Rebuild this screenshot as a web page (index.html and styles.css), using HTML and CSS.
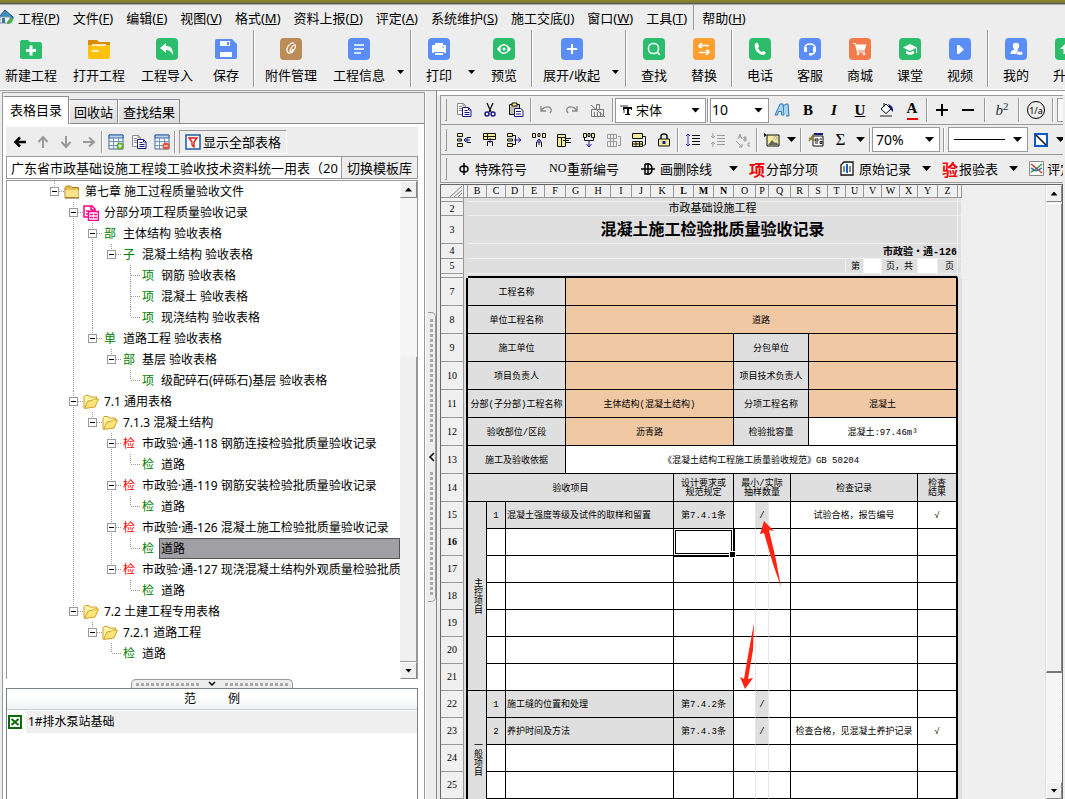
FILE: index.html
```
<!DOCTYPE html>
<html lang="zh-CN">
<head>
  <meta charset="UTF-8" />
  <meta name="viewport" content="width=device-width, initial-scale=1.0"/>
  <title>市政验·通-126 混凝土施工检验批质量验收记录</title>
  <link rel="stylesheet" href="styles.css">
</head>
<body>

<!-- shared icons -->
<svg class="defs" width="0" height="0">
  <symbol id="folder" viewBox="0 0 16 16"><path d="M1 3.5 2.5 2h4L8 3.500h6.500v10H1z" fill="#e9bf4b" stroke="#a87a1c"/><path d="M1.500 6h13v7.500h-13z" fill="#fbe38d"/><path d="M1 14h14" stroke="#7d5a12"/></symbol>
  <symbol id="open" viewBox="0 0 16 16"><path d="M1 14V2.500l1-1h4l1 1.500h6.500V6" fill="#fdf3a8" stroke="#d2a02c"/><path d="M1.500 14.500 5 7l4-.5L10.500 5h5L12 13z" fill="#fbe47a" stroke="#d2a02c"/></symbol>
  <symbol id="pages" viewBox="0 0 16 16"><path d="M1.500 1.500h6l2 2v9h-8zM7 1.500v2.500h2.500M3 4.500h3M3 6.500h3M3 8.500h3" fill="#fff" stroke="#888"/><path d="M6.500 5.500h6l2.500 2.500v6.500h-8.500z" fill="#fff" stroke="#1a1a80"/><path d="M12.500 5.500V8H15M8.500 8.500h3M8.500 10.500h5M8.500 12.500h5" fill="none" stroke="#1a1a80"/></symbol>
  <symbol id="grid" viewBox="0 0 16 16"><path d="M1 1h14v14H1z" fill="#fff" stroke="#39649c"/><path d="M1 1h14v3H1z" fill="#b9d2f0" stroke="#39649c"/><path d="M1 7.500h14M1 11.500h14M5.500 4v11M10.500 4v11" stroke="#6c92c4"/></symbol>
</svg>

<div class="titlebar"></div>

<nav class="menu">
  <svg class="logo" width="14" height="16" viewBox="0 0 14 16"><path d="M-1 8 5 1l8 7v2H-1z" fill="#3d8fc4" stroke="#24566f"/><path d="M0 8h10v6H0z" fill="#f3f6f8" stroke="#8896a0"/><path d="M2 9h3v5H2z" fill="#3f76a8"/><path d="M7 15c0-4 3-6 6-6 0 4-2 6-6 6z" fill="#4caf50"/></svg>
  <button>工程(<u>P</u>)</button>
  <button>文件(<u>F</u>)</button>
  <button>编辑(<u>E</u>)</button>
  <button>视图(<u>V</u>)</button>
  <button>格式(<u>M</u>)</button>
  <button>资料上报(<u>D</u>)</button>
  <button>评定(<u>A</u>)</button>
  <button>系统维护(<u>S</u>)</button>
  <button>施工交底(<u>J</u>)</button>
  <button>窗口(<u>W</u>)</button>
  <button>工具(<u>T</u>)</button>
  <button class="help">帮助(<u>H</u>)</button>
</nav>

<div class="toolbar">
  <button><svg viewBox="0 0 22 22"><path d="M0 4q0-2 2-2h6l2 2h10q2 0 2 2v13q0 2-2 2H2q-2 0-2-2z" fill="#2cbd6c"/><path d="M9.500 7.500h3V11H16v3h-3.500v3.500h-3V14H6v-3h3.500z" fill="#fff"/></svg>新建工程</button>
  <button><svg viewBox="0 0 22 22"><path d="M0 3q0-1 1-1h8l2 2h10q1 0 1 1v5H0z" fill="#d98a08"/><path d="M0 7h22v12q0 2-2 2H2q-2 0-2-2z" fill="#ffc20e"/><path d="M4 7h14M4 13h7" stroke="#fff" stroke-width="1.500"/></svg>打开工程</button>
  <button><svg viewBox="0 0 22 22"><rect width="22" height="22" rx="4" fill="#2cbd6c"/><path d="M4 10 10 5v3c5 0 7 3 7 9-2-4-4-5-7-5v3z" fill="#fff"/></svg>工程导入</button>
  <button><svg viewBox="0 0 22 22"><path d="M0 3q0-2 2-2h15l5 5v13q0 2-2 2H2q-2 0-2-2z" fill="#5a8df5"/><path d="M5 3h10v5H5zM5 14h12v5H5z" fill="#fff"/><path d="M12 4h2v3h-2z" fill="#5a8df5"/></svg>保存</button>
  <span class="sep"></span>
  <button><svg viewBox="0 0 22 22"><rect width="22" height="22" rx="4" fill="#bb8c58"/><path d="M14 5c-4-1-8 5-7 8s5 3 7-1 2-6 0-5-4 5-4 6 2 1 3-2" fill="none" stroke="#fff" stroke-width="1.200"/></svg>附件管理</button>
  <button><svg viewBox="0 0 22 22"><rect width="22" height="22" rx="4" fill="#5a8df5"/><path d="M6 7h10M6 11h10M6 15h7" stroke="#fff" stroke-width="1.500"/></svg>工程信息</button>
  <button class="drop" aria-label="工程信息选项"><i class="arrow"></i></button>
  <span class="sep"></span>
  <button><svg viewBox="0 0 22 22"><rect width="22" height="22" rx="4" fill="#5a8df5"/><path d="M7 5h8v2h2q1 0 1 1v6q0 1-1 1h-2v2H7v-2H5q-1 0-1-1V8q0-1 1-1h2z" fill="#fff"/><path d="M6 14.500h10" stroke="#5a8df5"/><path d="M14 9h2" stroke="#5a8df5"/></svg>打印</button>
  <button class="drop" aria-label="打印选项"><i class="arrow"></i></button>
  <button><svg viewBox="0 0 22 22"><rect width="22" height="22" rx="4" fill="#2cbd6c"/><path d="M4 11q7-10 14 0-7 10-14 0z" fill="#fff"/><circle cx="11" cy="11" r="3.500" fill="#2cbd6c"/><circle cx="11" cy="11" r="1.500" fill="#fff"/></svg>预览</button>
  <span class="sep"></span>
  <button><svg viewBox="0 0 22 22"><rect width="22" height="22" rx="4" fill="#5a8df5"/><path d="M11 6v10M6 11h10" stroke="#fff" stroke-width="2"/></svg>展开/收起</button>
  <button class="drop" aria-label="展开选项"><i class="arrow"></i></button>
  <span class="sep"></span>
  <button><svg viewBox="0 0 22 22"><rect width="22" height="22" rx="4" fill="#2cbd6c"/><rect x="5.500" y="5.500" width="10" height="10" rx="4.500" fill="none" stroke="#fff" stroke-width="1.500"/><path d="m14 14 3 3" stroke="#fff" stroke-width="1.500"/></svg>查找</button>
  <button><svg viewBox="0 0 22 22"><rect width="22" height="22" rx="4" fill="#ff9f30"/><path d="M16 7.500H6.500V10M9 5 6 7.500 9 10M6 14.500h9.500V12M13 12l3 2.500-3 2.500" fill="none" stroke="#fff" stroke-width="1.500"/></svg>替换</button>
  <span class="sep"></span>
  <button><svg viewBox="0 0 22 22"><rect width="22" height="22" rx="4" fill="#2cbd6c"/><path d="M7 5q2-1 3 3 0 1-1 2 1 3 4 4l1-1q4 1 2 3-2 2-5 0-4-2-5-6-1-4 1-5z" fill="#fff"/></svg>电话</button>
  <button><svg viewBox="0 0 22 22"><rect width="22" height="22" rx="4" fill="#5a8df5"/><path d="M6 12v-2q0-4 5-4t5 4v2q0 4-4 4.500" fill="none" stroke="#fff" stroke-width="1.500"/><path d="M5 9h3v5H5zM14 9h3v5h-3zM10 15h3v2.500h-3z" fill="#fff"/></svg>客服</button>
  <button><svg viewBox="0 0 22 22"><rect width="22" height="22" rx="4" fill="#f47a4a"/><path d="M4 5.500h2.500l2 8.500H16" fill="none" stroke="#fff" stroke-width="1.200"/><path d="M7 6.500h10.500l-2 6h-7z" fill="#fff"/><circle cx="9" cy="16" r="1.300" fill="#fff"/><circle cx="15" cy="16" r="1.300" fill="#fff"/></svg>商城</button>
  <button><svg viewBox="0 0 22 22"><rect width="22" height="22" rx="4" fill="#2cbd6c"/><path d="m4 9.500 7-3.500 7 3.500-7 3.500zM7 12.500l4 2 4-2v3q-4 2.500-8 0z" fill="#fff"/><path d="M17.500 10v5" stroke="#fff"/></svg>课堂</button>
  <button><svg viewBox="0 0 22 22"><rect width="22" height="22" rx="4" fill="#5a8df5"/><path d="M8 7h2l5 4.500-5 4.500H8z" fill="#fff"/></svg>视频</button>
  <span class="sep"></span>
  <button><svg viewBox="0 0 22 22"><rect width="22" height="22" rx="4" fill="#5a8df5"/><circle cx="11" cy="8" r="3.200" fill="#fff"/><path d="M5.500 16q0-4 4-4.500V10h3v1.500l1 1.500V16z" fill="#fff"/><path d="M12 13.500h5.500v3.500H12z" fill="#fff" stroke="#5a8df5" stroke-width=".5"/></svg>我的</button>
  <button><svg viewBox="0 0 22 22"><rect width="22" height="22" rx="4" fill="#2cbd6c"/><path d="m11 5 6 6h-3.500v5h-5v-5H5z" fill="#fff"/></svg>升级</button>
</div>

<main>
  <section class="side">
    <div class="tabs">
      <button class="active">表格目录</button><button>回收站</button><button>查找结果</button>
      <span class="rest"></span>
    </div>
    <div class="pane">
      <div class="side-tools">
        <button aria-label="后退"><svg viewBox="0 0 16 16"><path d="M14 8H3M8 3.500 3.500 8 8 12.500" fill="none" stroke="#000" stroke-width="2.500"/></svg></button>
        <button aria-label="上移"><svg viewBox="0 0 16 16"><path d="M8 14V3M3.500 8 8 3l4.500 5" fill="none" stroke="#999" stroke-width="2"/></svg></button>
        <button aria-label="下移"><svg viewBox="0 0 16 16"><path d="M8 2v11M3.500 8 8 13l4.500-5" fill="none" stroke="#999" stroke-width="2"/></svg></button>
        <button aria-label="前进"><svg viewBox="0 0 16 16"><path d="M2 8h11M8 3.500 13 8l-5 4.500" fill="none" stroke="#999" stroke-width="2"/></svg></button>
        <span class="sep"></span>
        <button aria-label="增加表格"><svg viewBox="0 0 16 16"><use href="#grid"/><circle cx="12" cy="12" r="3.500" fill="#5fae27"/><path d="M10 12h4M12 10v4" stroke="#fff"/></svg></button>
        <button aria-label="复制表格"><svg viewBox="0 0 16 16"><use href="#pages"/></svg></button>
        <button aria-label="删除表格"><svg viewBox="0 0 16 16"><use href="#grid"/><circle cx="12" cy="12" r="3.500" fill="#e0542f"/><path d="M10 12h4" stroke="#fff"/></svg></button>
        <span class="sep"></span>
        <button class="showall"><svg viewBox="0 0 16 16"><path d="M1 1h14v14H1z" fill="#fff" stroke="#1c5aa0" stroke-width="1.500"/><path d="M4 4h8L9 8v5L7 11V8z" fill="none" stroke="#e01010" stroke-width="1.300"/></svg>显示全部表格</button>
      </div>
      <div class="template">
        <input type="text" aria-label="模板库" value="广东省市政基础设施工程竣工验收技术资料统一用表（20">
        <button>切换模板库</button>
      </div>
      <div class="treebox">
        <ul class="tree">
          <li><div class="node"><i class="box"></i><svg class="ico"><use href="#folder"/></svg><span>第七章 施工过程质量验收文件</span></div>
            <ul>
              <li><div class="node"><i class="box"></i><svg class="ico" viewBox="0 0 16 16"><path d="M1 1h8l3 3v8H1zM8 1v4h4M3 6h3M3 9h2" fill="#fff" stroke="#f08" stroke-width="1.500"/><path d="M5.500 6.500h10v9h-10z" fill="#fff" stroke="#f08" stroke-width="1.500"/><path d="M7 9.500h3m1 0h3M7 12.500h3m1 0h3" stroke="#f08" stroke-width="1.500"/></svg><span>分部分项工程质量验收记录</span></div>
                <ul>
                  <li><div class="node"><i class="box"></i><b>部</b><span>主体结构 验收表格</span></div>
                    <ul>
                      <li><div class="node"><i class="box"></i><b>子</b><span>混凝土结构 验收表格</span></div>
                        <ul>
                          <li><div class="node"><i></i><b>项</b><span>钢筋 验收表格</span></div></li>
                          <li><div class="node"><i></i><b>项</b><span>混凝土 验收表格</span></div></li>
                          <li><div class="node"><i></i><b>项</b><span>现浇结构 验收表格</span></div></li>
                        </ul>
                      </li>
                    </ul>
                  </li>
                  <li><div class="node"><i class="box"></i><b>单</b><span>道路工程 验收表格</span></div>
                    <ul>
                      <li><div class="node"><i class="box"></i><b>部</b><span>基层 验收表格</span></div>
                        <ul>
                          <li><div class="node"><i></i><b>项</b><span>级配碎石(碎砾石)基层 验收表格</span></div></li>
                        </ul>
                      </li>
                    </ul>
                  </li>
                </ul>
              </li>
              <li><div class="node"><i class="box"></i><svg class="ico"><use href="#open"/></svg><span>7.1 通用表格</span></div>
                <ul>
                  <li><div class="node"><i class="box"></i><svg class="ico"><use href="#open"/></svg><span>7.1.3 混凝土结构</span></div>
                    <ul>
                      <li><div class="node"><i class="box"></i><b class="red">检</b><span>市政验·通-118 钢筋连接检验批质量验收记录</span></div>
                        <ul><li><div class="node"><i></i><b>检</b><span>道路</span></div></li></ul>
                      </li>
                      <li><div class="node"><i class="box"></i><b class="red">检</b><span>市政验·通-119 钢筋安装检验批质量验收记录</span></div>
                        <ul><li><div class="node"><i></i><b>检</b><span>道路</span></div></li></ul>
                      </li>
                      <li><div class="node"><i class="box"></i><b class="red">检</b><span>市政验·通-126 混凝土施工检验批质量验收记录</span></div>
                        <ul><li><div class="node"><i></i><b>检</b><span class="selected">道路</span></div></li></ul>
                      </li>
                      <li><div class="node"><i class="box"></i><b class="red">检</b><span>市政验·通-127 现浇混凝土结构外观质量检验批质</span></div>
                        <ul><li><div class="node"><i></i><b>检</b><span>道路</span></div></li></ul>
                      </li>
                    </ul>
                  </li>
                </ul>
              </li>
              <li><div class="node"><i class="box"></i><svg class="ico"><use href="#open"/></svg><span>7.2 土建工程专用表格</span></div>
                <ul>
                  <li><div class="node"><i class="box"></i><svg class="ico"><use href="#open"/></svg><span>7.2.1 道路工程</span></div>
                    <ul><li><div class="node"><i></i><b>检</b><span>道路</span></div></li></ul>
                  </li>
                </ul>
              </li>
            </ul>
          </li>
        </ul>
        <div class="scroll tree-scroll">
          <button aria-label="向上"><i class="arrow up"></i></button>
          <span class="track before"></span><span class="thumb"></span>
          <button aria-label="向下"><i class="arrow"></i></button>
        </div>
      </div>
      <div class="hsplit"><div><span class="dots"></span><svg width="18" height="8" viewBox="0 0 18 8"><path d="m6 2 3 3 3-3" fill="none" stroke="#000" stroke-width="1.500"/></svg><span class="dots"></span></div></div>
      <div class="examples">
        <h4>范<span></span>例</h4>
        <div class="example"><svg width="14" height="14" viewBox="0 0 14 14"><path d="M1 1h12v12H1z" fill="#fff" stroke="#0a6b0a" stroke-width="2"/><path d="m3.500 4 7 6M10.500 4l-7 6" stroke="#0a6b0a" stroke-width="2"/></svg><span>1#排水泵站基础</span></div>
      </div>
    </div>
  </section>

  <div class="vsplit"><div><span class="dots"></span><svg width="8" height="18" viewBox="0 0 8 18"><path d="M6 5 2 9l4 4" fill="none" stroke="#000" stroke-width="1.500"/></svg><span class="dots"></span></div></div>

  <section class="editor">
    <div class="bar bar-font">
      <span class="grip"></span>
      <button class="tool" aria-label="复制"><svg viewBox="0 0 16 16"><use href="#pages"/></svg></button>
      <button class="tool" aria-label="剪切"><svg viewBox="0 0 16 16"><path d="m5 1 4 9M11 1 7 10" stroke="#111" stroke-width="1.300"/><circle cx="5" cy="12" r="2" fill="none" stroke="#1a1a80" stroke-width="1.500"/><circle cx="11" cy="12" r="2" fill="none" stroke="#1a1a80" stroke-width="1.500"/></svg></button>
      <button class="tool" aria-label="粘贴"><svg viewBox="0 0 16 16"><path d="M1.500 2.500h10v10h-10z" fill="#c9c3ae" stroke="#111"/><path d="M4 1h5v3H4z" fill="#f6e58c" stroke="#111"/><path d="M6.500 6.500h6l2.500 2v6H6.500z" fill="#fff" stroke="#1a1a80"/><path d="M8 9.500h5M8 12h5" stroke="#1a1a80"/></svg></button>
      <span class="sep"></span>
      <button class="tool" aria-label="撤销"><svg viewBox="0 0 16 16"><path d="M3 4v5h5M3 9q3-5 8-4 4 2 1 6" fill="none" stroke="#888" stroke-width="1.300"/></svg></button>
      <button class="tool" aria-label="重做"><svg viewBox="0 0 16 16"><path d="M13 4v5H8M13 9Q10 4 5 5q-4 2-1 6" fill="none" stroke="#888" stroke-width="1.300"/></svg></button>
      <button class="tool" aria-label="清除格式"><svg viewBox="0 0 16 16"><path d="M1.500 7.500h12v7h-12zM6.500 7V2.500h3V7M4.500 14v-4M7.500 14v-4M10.500 14v-4M1 3l14 12" fill="none" stroke="#777"/></svg></button>
      <span class="sep"></span>
      <div class="combo font"><svg width="14" height="12" viewBox="0 0 14 12"><path d="M1 1h8v2H6v6H4V3H1z" fill="#999"/><path d="M4 3h9v3h-1V5h-2v5h1v1H6v-1h2V5H5v1H4z" fill="#111"/></svg><select aria-label="字体"><option>宋体</option></select><i class="arrow"></i></div>
      <span class="sep"></span>
      <div class="combo size"><select aria-label="字号"><option>10</option></select><i class="arrow"></i></div>
      <button class="tool" aria-label="艺术字"><svg viewBox="0 0 16 16"><path d="m1 13 5-11h3l1 11H7.500V9.500h-3L3.500 13zM9 4l3-2h2l1 12h-3" fill="#a8d4f2" stroke="#2878b8"/></svg></button>
      <button class="tool letter bold">B</button>
      <button class="tool letter italic">I</button>
      <button class="tool letter under">U</button>
      <button class="tool" aria-label="填充颜色"><svg viewBox="0 0 16 16"><path d="m3 7 5-5 5 5-5 4.500z" fill="#fff" stroke="#111"/><path d="M6 5V1" stroke="#111"/><path d="M10 2q6 2 5 8l-3-3z" fill="#1a1a80"/><path d="M2 14h12" stroke="#888" stroke-width="2"/></svg></button>
      <button class="tool letter color">A</button>
      <span class="sep"></span>
      <button class="tool" aria-label="增大"><svg viewBox="0 0 16 16"><path d="M8 2v12M2 8h12" stroke="#000" stroke-width="2"/></svg></button>
      <button class="tool" aria-label="减小"><svg viewBox="0 0 16 16"><path d="M2 8h12" stroke="#000" stroke-width="2"/></svg></button>
      <span class="sep wide"></span>
      <button class="tool letter super"><em>b</em><sup>2</sup></button>
      <span class="sep wide"></span>
      <button class="tool round">1/a</button>
      <span class="sep wide"></span>
      <button class="tool pressed" aria-label="对齐"><svg viewBox="0 0 16 16"><path d="M5 2v12" stroke="#000" stroke-width="2"/></svg></button>
    </div>

    <div class="bar">
      <span class="grip"></span>
      <button class="tool" aria-label="插入单元格"><svg viewBox="0 0 16 16"><path d="M1.500 1.500h5v3h-5zM1.500 11.500h5v3h-5zM1.500 7h4v2h-4z" fill="#f5ec9a" stroke="#111"/><path d="M15 5.500h-4v5h4" fill="none" stroke="#111"/><path d="M14 8H8m2-2L8 8l2 2" fill="none" stroke="#1a1aa0"/></svg></button>
      <button class="tool" aria-label="插入行"><svg viewBox="0 0 16 16"><path d="M2.500 1.500h12v6h-12zM2.500 4.500h12M6.500 1.500v6" fill="#f5ec9a" stroke="#111"/><path d="M6.500 14V9.500h5V14" fill="none" stroke="#111"/><path d="M9 11V6" stroke="#1a1aa0"/></svg></button>
      <button class="tool" aria-label="右移"><svg viewBox="0 0 16 16"><path d="M1.500 1.500h5v3h-5zM1.500 11.500h5v3h-5zM1.500 7h5v2h-5z" fill="#f5ec9a" stroke="#111"/><path d="M6.500 3.500h3v9h-3" fill="none" stroke="#111"/><path d="M8 8h7m-3-2.500L15 8l-3 2.500" fill="none" stroke="#1a1aa0"/></svg></button>
      <button class="tool" aria-label="下移"><svg viewBox="0 0 16 16"><path d="M1.500 1.500h3v4h-3zM11.500 1.500h3v4h-3zM7 1.500h2v3H7z" fill="#f5ec9a" stroke="#111"/><path d="M5.500 15v-5h5v5" fill="none" stroke="#111"/><path d="M8 13V7M6 9l2-2 2 2" fill="none" stroke="#1a1aa0"/></svg></button>
      <button class="tool" aria-label="插入列"><svg viewBox="0 0 16 16"><path d="M1.500 2.500h8v12h-8zM1.500 5.500h8M5.500 5v9" fill="#f5ec9a" stroke="#111"/><path d="M15 6.500H9.500v4H15M13 8.500H7" fill="none" stroke="#111"/></svg></button>
      <button class="tool" aria-label="删除列"><svg viewBox="0 0 16 16"><path d="M2.500 1.500h3v4h-3zM10.500 1.500h3v4h-3zM7 1.500h2v3H7z" fill="#f5ec9a" stroke="#111"/><path d="M3.500 6v2.500h9V6" fill="none" stroke="#111"/><path d="M8 8v7m-2.500-3L8 15l2.500-3" fill="none" stroke="#1a1aa0"/></svg></button>
      <button class="tool" aria-label="合并"><svg viewBox="0 0 16 16"><path d="M1.500 2.500h9v4h-9zM1.500 9.500h9v5h-9zM4.500 2.500v12M7.500 2.500v12M12 4.500h2.500v9H12" fill="none" stroke="#999"/></svg></button>
      <button class="tool" aria-label="拆分"><svg viewBox="0 0 16 16"><path d="M1.500 1.500h10v5h-10zM1.500 9.500h10v5h-10zM1.500 12h10M5 9v5M8.500 9v5" fill="#f5ec9a" stroke="#111"/><path d="M12 4.500h2.500v8l-2 1" fill="none" stroke="#111"/></svg></button>
      <button class="tool" aria-label="锁定"><svg viewBox="0 0 16 16"><path d="M5 7V4q0-2 3-2t3 2v3" fill="none" stroke="#111" stroke-width="1.500"/><path d="M2.500 7h11v7h-11z" fill="#f5ec9a" stroke="#111"/><path d="M6.500 9h3v3h-3z" fill="#1a1a80"/></svg></button>
      <span class="sep"></span>
      <button class="tool" aria-label="增大行距"><svg viewBox="0 0 16 16"><path d="M3 2v12M1 4l2-2 2 2M1 12l2 2 2-2" fill="none" stroke="#3a3ab0"/><path d="M7 3.500h8M7 6.500h8M7 9.500h8M7 12.500h8" stroke="#111"/></svg></button>
      <button class="tool" aria-label="减小行距"><svg viewBox="0 0 16 16"><path d="M3 1v5M1 4l2 2 2-2M3 15v-5M1 12l2-2 2 2M7 3.500h8M7 6.500h8M7 9.500h8M7 12.500h8" fill="none" stroke="#999"/></svg></button>
      <button class="tool" aria-label="斜向文字"><svg viewBox="0 0 16 16"><path d="m3 7 2-5 2 5M4 5h2M9 9V5h2v2H9h2v2zM15 11h-2v3h2M1 9l6 6M7 12v3H4" fill="none" stroke="#999"/></svg></button>
      <span class="sep"></span>
      <button class="tool" aria-label="插入图片"><svg viewBox="0 0 16 16"><path d="M3 3h12v11H3z" fill="#f5ec9a" stroke="#111"/><path d="m4 13 4-5 3 3 1-1 3 3z" fill="#666"/><circle cx="11.500" cy="6" r="1.500" fill="#fff" stroke="#555" stroke-width=".5"/><path d="M0 1v4l3-2z" fill="#111"/></svg></button>
      <button class="drop" aria-label="图片选项"><i class="arrow"></i></button>
      <span class="sep"></span>
      <button class="tool" aria-label="控件"><svg viewBox="0 0 16 16"><path d="M5 4h10v10H5z" fill="#fff" stroke="#111"/><path d="M7 7h3v2H7zM11.500 7H14M7 11h3M12 9.500h2v2h-2z" fill="none" stroke="#111"/><path d="M6 2h9" stroke="#1a1a80" stroke-width="2"/><path d="M1 9 6 2M1 6l5 2" stroke="#8a7a20" stroke-width="1.500"/></svg></button>
      <button class="tool letter sum">Σ</button>
      <button class="drop" aria-label="求和选项"><i class="arrow"></i></button>
      <span class="sep"></span>
      <div class="combo zoom"><select aria-label="显示比例"><option>70%</option></select><i class="arrow"></i></div>
      <span class="sep wide"></span>
      <div class="combo line"><select aria-label="线型"><option></option></select><i class="arrow"></i></div>
      <button class="tool" aria-label="边框"><svg viewBox="0 0 16 16"><path d="M2 2h12v12H2z" fill="#fff" stroke="#0a5ac8" stroke-width="2"/><path d="m3 3 10 10" stroke="#111" stroke-width="1.500"/></svg></button>
      <button class="drop" aria-label="边框选项"><i class="arrow"></i></button>
    </div>

    <div class="bar bar-text">
      <span class="grip"></span>
      <button><svg width="12" height="14" viewBox="0 0 12 14"><path d="M6 1v12M2 7q0-3 4-3t4 3-4 3-4-3" fill="none" stroke="#000" stroke-width="1.500"/></svg>特殊符号</button>
      <button><span class="no">NO</span>重新编号</button>
      <button><svg width="14" height="14" viewBox="0 0 14 14"><path d="M4 2h3q4 0 4 5t-4 5H4V2M0 7h14M7 1v12" fill="none" stroke="#000" stroke-width="1.500"/></svg>画删除线</button>
      <button class="drop far" aria-label="删除线选项"><i class="arrow"></i></button>
      <button><span class="glyph">项</span>分部分项</button>
      <button><svg width="14" height="15" viewBox="0 0 14 15"><path d="M1 4 4 1h9v13H1z" fill="#fff" stroke="#111" stroke-width="1.300"/><path d="M3 6h2M3 8h2M3 10h2M9 6h2M9 8h2M9 10h2" stroke="#111"/><path d="M7 3v9" stroke="#1464c8" stroke-width="2"/></svg>原始记录</button>
      <button class="drop" aria-label="原始记录选项"><i class="arrow"></i></button>
      <button><span class="glyph">验</span>报验表</button>
      <button class="drop" aria-label="报验表选项"><i class="arrow"></i></button>
      <button class="rate"><svg width="15" height="15" viewBox="0 0 15 15"><path d="M.5.5h14v14H.5z" fill="#fff" stroke="#888"/><path d="m2 11 5-3 6-5" fill="none" stroke="#2a9a3c" stroke-width="1.500"/><path d="m2 3 5 4 6 5" fill="none" stroke="#d03020" stroke-width="1.500"/><path d="m2 7 5 3 6-3" fill="none" stroke="#3a78c0" stroke-width="1.500"/></svg>评定</button>
    </div>

    <div class="sheet">
      <div class="canvas">
      <table>
        <colgroup>
          <col style="width:23px"><col style="width:4px"><col style="width:19px"><col style="width:19px"><col style="width:18px"><col style="width:21px"><col style="width:21px"><col style="width:20px"><col style="width:25px"><col style="width:21px"><col style="width:19px"><col style="width:23px"><col style="width:20px"><col style="width:20px"><col style="width:20px"><col style="width:22px"><col style="width:13px"><col style="width:22px"><col style="width:18px"><col style="width:19px"><col style="width:18px"><col style="width:18px"><col style="width:18px"><col style="width:18px"><col style="width:18px"><col style="width:20px"><col style="width:20px"><col style="width:4px">
        </colgroup>
        <thead>
          <tr><th><svg class="corner" width="14" height="11" viewBox="0 0 14 11"><path d="M1 11 13 0M5 11l8-7M9 11l4-4" stroke="#888"/></svg></th><th></th><th>B</th><th>C</th><th>D</th><th>E</th><th>F</th><th>G</th><th>H</th><th>I</th><th>J</th><th>K</th><th class="on">L</th><th class="on">M</th><th class="on">N</th><th>O</th><th>P</th><th>Q</th><th>R</th><th>S</th><th>T</th><th>U</th><th>V</th><th>W</th><th>X</th><th>Y</th><th>Z</th><th></th></tr>
        </thead>
        <tbody class="head">
          <tr class="thin"><th></th><td></td><td colspan="25"></td><td></td></tr>
          <tr class="r14"><th>2</th><td></td><td colspan="25" class="sub">市政基础设施工程</td><td></td></tr>
          <tr class="r28"><th>3</th><td></td><td colspan="25" class="title">混凝土施工检验批质量验收记录</td><td></td></tr>
          <tr class="r15"><th>4</th><td></td><td colspan="25" class="code">市政验・通-126</td><td></td></tr>
          <tr class="r15"><th>5</th><td></td><td colspan="19"></td><td class="right">第</td><td class="blank"></td><td colspan="2">页，共</td><td class="blank"></td><td class="right">页</td><td></td></tr>
          <tr class="thin edge"><th></th><td></td><td colspan="25"></td><td></td></tr>
        </tbody>
        <tbody class="form">
          <tr class="r28"><th>7</th><td></td><td colspan="5" class="lab">工程名称</td><td colspan="20" class="fill"></td><td></td></tr>
          <tr class="r28"><th>8</th><td></td><td colspan="5" class="lab">单位工程名称</td><td colspan="20" class="fill">道路</td><td></td></tr>
          <tr class="r28"><th>9</th><td></td><td colspan="5" class="lab">施工单位</td><td colspan="8" class="fill"></td><td colspan="4" class="lab">分包单位</td><td colspan="8" class="fill"></td><td></td></tr>
          <tr class="r28"><th>10</th><td></td><td colspan="5" class="lab">项目负责人</td><td colspan="8" class="fill"></td><td colspan="4" class="lab">项目技术负责人</td><td colspan="8" class="fill"></td><td></td></tr>
          <tr class="r28"><th>11</th><td></td><td colspan="5" class="lab">分部(子分部)工程名称</td><td colspan="8" class="fill">主体结构(混凝土结构)</td><td colspan="4" class="lab">分项工程名称</td><td colspan="8" class="fill">混凝土</td><td></td></tr>
          <tr class="r28"><th>12</th><td></td><td colspan="5" class="lab">验收部位/区段</td><td colspan="8" class="fill">沥青路</td><td colspan="4" class="lab">检验批容量</td><td colspan="8">混凝土:97.46m³</td><td></td></tr>
          <tr class="r28"><th>13</th><td></td><td colspan="5" class="lab">施工及验收依据</td><td colspan="20">《混凝土结构工程施工质量验收规范》GB 50204</td><td></td></tr>
          <tr class="r28"><th>14</th><td></td><td colspan="10" class="lab">验收项目</td><td colspan="3" class="lab">设计要求或<br>规范规定</td><td colspan="3" class="lab">最小/实际<br>抽样数量</td><td colspan="7" class="lab">检查记录</td><td colspan="2" class="lab">检查<br>结果</td><td></td></tr>
          <tr class="r27"><th>15</th><td></td><td rowspan="7" class="lab vert"><span>主控项目</span></td><td class="lab">1</td><td colspan="8" class="lab left">混凝土强度等级及试件的取样和留置</td><td colspan="3" class="lab">第7.4.1条</td><td class="soft"></td><td class="soft lab">/</td><td></td><td colspan="7">试验合格，报告编号</td><td colspan="2">√</td><td></td></tr>
          <tr class="r27"><th class="on">16</th><td></td><td></td><td colspan="8"></td><td colspan="3" class="cursor"></td><td class="soft"></td><td class="soft"></td><td></td><td colspan="7"></td><td colspan="2"></td><td></td></tr>
          <tr class="r27"><th>17</th><td></td><td></td><td colspan="8"></td><td colspan="3"></td><td class="soft"></td><td class="soft"></td><td></td><td colspan="7"></td><td colspan="2"></td><td></td></tr>
          <tr class="r27"><th>18</th><td></td><td></td><td colspan="8"></td><td colspan="3"></td><td class="soft"></td><td class="soft"></td><td></td><td colspan="7"></td><td colspan="2"></td><td></td></tr>
          <tr class="r27"><th>19</th><td></td><td></td><td colspan="8"></td><td colspan="3"></td><td class="soft"></td><td class="soft"></td><td></td><td colspan="7"></td><td colspan="2"></td><td></td></tr>
          <tr class="r27"><th>20</th><td></td><td></td><td colspan="8"></td><td colspan="3"></td><td class="soft"></td><td class="soft"></td><td></td><td colspan="7"></td><td colspan="2"></td><td></td></tr>
          <tr class="r27"><th>21</th><td></td><td></td><td colspan="8"></td><td colspan="3"></td><td class="soft"></td><td class="soft"></td><td></td><td colspan="7"></td><td colspan="2"></td><td></td></tr>
          <tr class="r27"><th>22</th><td></td><td rowspan="5" class="lab vert"><span>一般项目</span></td><td class="lab">1</td><td colspan="8" class="lab left">施工缝的位置和处理</td><td colspan="3" class="lab">第7.4.2条</td><td class="soft"></td><td class="soft lab">/</td><td></td><td colspan="7"></td><td colspan="2"></td><td></td></tr>
          <tr class="r27"><th>23</th><td></td><td class="lab">2</td><td colspan="8" class="lab left">养护时间及方法</td><td colspan="3" class="lab">第7.4.3条</td><td class="soft"></td><td class="soft lab">/</td><td></td><td colspan="7">检查合格，见混凝土养护记录</td><td colspan="2">√</td><td></td></tr>
          <tr class="r27"><th>24</th><td></td><td></td><td colspan="8"></td><td colspan="3"></td><td class="soft"></td><td class="soft"></td><td></td><td colspan="7"></td><td colspan="2"></td><td></td></tr>
          <tr class="r27"><th>25</th><td></td><td></td><td colspan="8"></td><td colspan="3"></td><td class="soft"></td><td class="soft"></td><td></td><td colspan="7"></td><td colspan="2"></td><td></td></tr>
          <tr class="r27"><th></th><td></td><td></td><td colspan="8"></td><td colspan="3"></td><td class="soft"></td><td class="soft"></td><td></td><td colspan="7"></td><td colspan="2"></td><td></td></tr>
        </tbody>
      </table>
      <svg class="marks" width="521" height="614" viewBox="441 185 521 614">
        <path d="M764 521 774 531 769 530 776 560 781 587 773 564 764 533 760 534z" fill="#ff2312"/>
        <path d="M745 689 740 677 744 679 749 650 754 623 753 650 748 679 753 678z" fill="#ff2312"/>
      </svg>
      </div>
      <div class="scroll sheet-scroll">
        <button aria-label="向上"><i class="arrow up"></i></button>
        <span class="thumb"></span><span class="track"></span>
        <button aria-label="向下"><i class="arrow"></i></button>
      </div>
    </div>
  </section>
</main>

</body>
</html>
```
FILE: styles.css
```
* { box-sizing: border-box; }
body {
  font-family: "Noto Sans", "Noto Sans CJK SC", sans-serif;
  font-size: 13px;
  line-height: 18px;
  margin: 0;
  height: 100vh;
  overflow: hidden;
  background: #ededed;
  color: #000;
  display: flex;
  flex-direction: column;
}
button, select, input {
  font: inherit;
  color: inherit;
  border: none;
  border-radius: 0;
  background: none;
  padding: 0;
  margin: 0;
  white-space: nowrap;
}
ul { list-style: none; margin: 0; padding: 0; }
.defs { position: absolute; }
.titlebar {
  flex: none;
  height: 5px;
  background: linear-gradient(#87822e 0 2px, #77723f 2px 3px, #625f45 3px 4px, #aaa 4px);
}
.arrow {
  flex: none;
  width: 9px;
  height: 5px;
  background: #000;
  clip-path: polygon(0 0, 100% 0, 50% 100%);
}
.arrow.up { clip-path: polygon(50% 0, 100% 100%, 0 100%); }
.sep {
  flex: none;
  width: 2px;
  margin: 0 1px;
  background: linear-gradient(90deg, #999 1px, #fff 1px);
}

/* menu */
.menu {
  flex: none;
  display: flex;
  gap: 13px;
  height: 25px;
}
.menu button { height: 25px; }
.menu .logo { margin: 4px -9px 0 0; flex: none; }
.menu .help { border-left: 1px solid #999; padding-left: 8px; margin-left: -7px; }

/* main toolbar */
.toolbar {
  flex: none;
  display: flex;
  height: 60px;
  margin-left: -3px;
  padding-bottom: 2px;
  overflow: hidden;
  border-bottom: 1px solid #fff;
}
.toolbar button {
  flex: none;
  display: flex;
  flex-direction: column;
  align-items: center;
  min-width: 50px;
  padding: 8px 8px 0;
}
.toolbar button svg { width: 22px; height: 22px; margin-bottom: 6px; }
.toolbar .sep { margin: 0 2px; }
.toolbar .drop { min-width: 15px; padding: 27px 0 0; }
.toolbar .arrow { width: 7px; height: 4px; }

main {
  flex: 1;
  min-height: 0;
  display: flex;
  border-top: 1px solid #999;
}

/* left side */
.side {
  flex: none;
  width: 423px;
  margin: 1px 0 0 2px;
  border: 1px solid #999;
  border-bottom: none;
  background: #fff;
  display: flex;
  flex-direction: column;
}
.tabs {
  flex: none;
  display: flex;
  align-items: flex-end;
  height: 31px;
  padding-top: 3px;
  background: #ededed;
}
.tabs button {
  height: 25px;
  padding: 0 4px;
  border: 1px solid #8a8a94;
  border-left-color: #fff;
  background: linear-gradient(#f2f2f2, #dcdcdc);
}
.tabs .active {
  height: 28px;
  padding: 0 6px 2px;
  border-bottom: none;
  background: #fff;
}
.tabs .rest { flex: 1; height: 1px; background: #8a8a94; }
.pane {
  flex: 1;
  min-height: 0;
  display: flex;
  flex-direction: column;
  padding: 3px 6px 0 3px;
}
.side-tools {
  flex: none;
  display: flex;
  align-items: center;
  height: 29px;
  padding-left: 2px;
  background: #ededed;
}
.side-tools button { width: 23px; height: 16px; }
.side-tools svg { width: 16px; height: 16px; }
.side-tools button svg { display: block; margin: 0 auto; }
.side-tools .sep { height: 22px; }
.side-tools .showall {
  display: flex;
  align-items: center;
  gap: 2px;
  width: auto;
  height: 24px;
  margin-left: 2px;
  padding: 0 5px;
  border: 1px solid #999;
  border-right-color: #fff;
  border-bottom-color: #fff;
}
.template {
  flex: none;
  display: flex;
  height: 23px;
  border: 1px solid #999;
}
.template input {
  flex: 1;
  min-width: 0;
  padding-left: 4px;
  background: #fff;
}
.template button {
  width: 76px;
  border-left: 1px solid #999;
  background: #ededed;
}
.treebox {
  flex: 1;
  min-height: 0;
  display: flex;
  margin-top: 1px;
  border: 1px solid #999;
  border-bottom: none;
}
.tree {
  flex: 1;
  min-width: 0;
  padding-left: 43px;
  overflow: hidden;
  font-size: 12px;
}
.tree ul { padding-left: 19px; }
.tree li {
  background: repeating-linear-gradient(#999 0 1px, transparent 1px 2px) 4px 0 / 1px 100% no-repeat;
}
.tree li:last-child { background-size: 1px 10px; }
.node {
  display: flex;
  align-items: center;
  height: 21px;
  white-space: nowrap;
  background: repeating-linear-gradient(90deg, #999 0 1px, transparent 1px 2px) 5px 10px / 9px 1px no-repeat;
}
.node i { flex: none; width: 9px; height: 9px; margin-right: 5px; }
.node .box {
  border: 1px solid #999;
  background: linear-gradient(#000, #000) center / 5px 1px no-repeat #fff;
}
.node .ico { flex: none; width: 16px; height: 16px; margin-right: 4px; }
.node b {
  flex: none;
  width: 20px;
  padding-left: 2px;
  color: #008000;
  font-weight: normal;
}
.node .red { color: #f00; }
.node span { padding-left: 1px; }
.node .selected {
  flex: 1;
  height: 21px;
  line-height: 19px;
  margin-left: -1px;
  border: 1px solid #555;
  background: #a0a0a4;
}
.scroll { flex: none; display: flex; flex-direction: column; }
.scroll button {
  flex: none;
  display: flex;
  align-items: center;
  justify-content: center;
  height: 17px;
  background: #f0f0f0;
  border: 1px solid #fff;
  border-right-color: #888;
  border-bottom-color: #888;
}
.scroll .arrow { width: 7px; height: 4px; }
.track { background: repeating-conic-gradient(#fff 0 25%, #ececec 0 50%) 0 0 / 2px 2px; }
.thumb { background: #f0f0f0; border-right: 1px solid #999; }
.tree-scroll { width: 17px; }
.tree-scroll .track { flex: 160; }
.tree-scroll .thumb { flex: 305; border-bottom: 1px solid #999; }
.hsplit { flex: none; display: flex; justify-content: center; height: 9px; }
.hsplit div {
  display: flex;
  width: 162px;
  border: 1px solid #999;
  border-bottom: none;
  border-radius: 5px 5px 0 0;
  background: #ededed;
}
.dots {
  flex: 1;
  margin: 3px 4px 2px;
  background: linear-gradient(90deg, #aaa 3px, transparent 3px) 0 0 / 5px 3px repeat-x;
}
.examples {
  flex: none;
  height: 111px;
  border: 1px solid #78828c;
  border-bottom: none;
  font-size: 12px;
}
.examples h4 {
  display: flex;
  justify-content: center;
  margin: 0;
  line-height: 20px;
  height: 21px;
  font-weight: normal;
  border-bottom: 1px solid #ccc;
  background: linear-gradient(#fff 40%, #f0f2f4);
}
.examples h4 span { width: 32px; }
.example { display: flex; align-items: center; height: 23px; padding-left: 1px; }
.example span {
  flex: 1;
  margin-left: 4px;
  padding-left: 2px;
  line-height: 22px;
  background: #efefef;
}

.vsplit { flex: none; display: flex; align-items: center; width: 11px; padding: 24px 0 0 2px; border-left: 1px solid #fff; }
.vsplit div {
  display: flex;
  flex-direction: column;
  width: 8px;
  height: 290px;
  border: 1px solid #999;
  border-left: none;
  border-radius: 0 5px 5px 0;
}
.vsplit .dots {
  margin: 6px 1px;
  background: linear-gradient(#aaa 3px, transparent 3px) 1px 0 / 3px 5px repeat-y;
}

/* editor */
.editor {
  flex: 1;
  min-width: 0;
  display: flex;
  flex-direction: column;
  border-left: 1px solid #888;
  padding: 4px 2px 0 3px;
  background: linear-gradient(#fff 4px, #ededed 4px);
}
.bar {
  flex: none;
  display: flex;
  align-items: center;
  height: 30px;
  overflow: hidden;
  border: 1px solid #999;
  border-width: 0 0 1px 1px;
  background: #ededed;
}
.bar-font { border-top-width: 1px; }
.bar-text { height: 28px; }
.bar .sep { height: 24px; }
.bar .sep.wide { margin: 0 3px; }
.grip {
  flex: none;
  width: 2px;
  height: 22px;
  margin: 0 4px;
  border-right: 1px solid #999;
  border-bottom: 1px solid #999;
}
.tool {
  flex: none;
  display: flex;
  align-items: center;
  justify-content: center;
  width: 25px;
  height: 24px;
}
.tool svg { width: 16px; height: 16px; }
.bar-font .tool { width: 26px; }
.letter { font: bold 15px "Liberation Serif", serif; }
.italic { font-style: italic; }
.under { text-decoration: underline; }
.sum { font-size: 17px; font-weight: normal; }
.letter.color {
  height: 20px;
  padding-bottom: 3px;
  background: linear-gradient(#f00, #f00) center bottom / 11px 2px no-repeat;
}
.super { color: #234; font-weight: normal; }
.super sup { font-size: 11px; line-height: 9px; align-self: flex-start; margin-top: 4px; }
.round { font-size: 9px; line-height: 9px; }
.bar .round {
  width: 18px;
  height: 18px;
  margin: 0 4px;
  border: 1px solid #000;
  border-radius: 50%;
}
.pressed { border: 1px solid #999; background: #f8f8f8; }
.drop {
  flex: none;
  display: flex;
  align-items: center;
  justify-content: center;
  width: 15px;
}
.combo {
  flex: none;
  display: flex;
  align-items: center;
  height: 25px;
  padding: 0 5px 0 3px;
  border: 1px solid #999;
  background: #fff;
}
.combo select {
  flex: 1;
  min-width: 0;
  height: 23px;
  appearance: none;
  font-size: 14px;
}
.font { width: 91px; }
.font select { font-size: 13px; margin-left: 3px; }
.size { width: 59px; padding-left: 1px; }
.zoom { width: 68px; }
.line { width: 80px; }
.line select {
  margin-right: 8px;
  background: linear-gradient(#000, #000) 2px center / 100% 1px no-repeat;
}
.bar-text button { flex: none; display: flex; align-items: center; gap: 5px; padding: 0 11px; }
.bar-text .drop { width: 9px; padding: 0; }
.bar-text .far { margin-left: 6px; }
.bar-text .rate { gap: 3px; }
.bar-text .grip { margin-right: 0; }
.bar-text .no { font: 12px "Liberation Serif", serif; width: 16px; margin-right: -3px; }
.bar-text .glyph { font: bold 16px "Noto Sans CJK SC", sans-serif; color: #e00; margin-right: -4px; }

/* sheet */
.sheet {
  flex: 1;
  min-height: 0;
  display: flex;
  margin-top: 1px;
  border: 1px solid #666;
  border-bottom: none;
  background: #efefef;
}
.canvas { flex: 1; min-width: 0; position: relative; overflow: hidden; }
.marks { position: absolute; left: 0; top: 0; }
table {
  table-layout: fixed;
  width: 521px;
  border-spacing: 0;
  font: 9px/9px "Liberation Mono", "Noto Sans CJK SC", monospace;
}
th, td { padding: 0; text-align: center; vertical-align: middle; overflow: hidden; white-space: nowrap; }
th {
  font: 10px/10px "Liberation Serif", serif;
  background: #f0f0f0;
  border-right: 1px solid #999;
  border-bottom: 1px solid #999;
}
th.on { font-weight: bold; }
thead tr { height: 13px; }
.corner { display: block; margin-left: auto; }
.head td {
  background: #dfdfdf;
  border-right: 1px solid #efefef;
  border-bottom: 1px solid #efefef;
}
.head td:nth-child(2) { border-right: none; border-bottom: none; }
.thin { height: 4px; }
.r14 { height: 14px; }
.r15 { height: 15px; }
.r27 { height: 27px; }
.r28 { height: 28px; }
.r15 td, .r27 td, .r28 td { padding-top: 3px; }
.edge td:nth-child(3) { border-bottom: 2px solid #000; }
.head .blank { background: #fff; }
.head .right { text-align: right; padding-right: 3px; }
.head .sub { font-size: 11px; line-height: 11px; padding-top: 1px; }
.head .title { font-size: 16px; line-height: 16px; font-weight: bold; }
.head .code { font-size: 10px; line-height: 10px; font-weight: bold; text-align: right; }
.form td {
  background: #fff;
  border-right: 1px solid #000;
  border-bottom: 1px solid #000;
}
.form td:nth-child(2) { background: #dfdfdf; border-right: 2px solid #000; border-bottom: none; }
.form td:last-child { background: #dfdfdf; border: none; }
.form td:nth-last-child(2) { border-right-width: 2px; }
.form .lab { background: #dfdfdf; }
.form .fill { background: #f0c8a4; }
.form .left { text-align: left; padding-left: 1px; }
.form .soft { border-right-color: #e6e6e6; }
.vert span { writing-mode: vertical-rl; line-height: 10px; }
.form .cursor {
  position: relative;
  overflow: visible;
  outline: 1px solid #000;
  box-shadow: inset 0 0 0 1px #fff, inset 0 0 0 2px #000;
}
.cursor::after {
  content: "";
  position: absolute;
  right: -3px;
  bottom: -3px;
  width: 5px;
  height: 5px;
  border: 1px solid #fff;
  background: #000;
}
.sheet-scroll { width: 17px; border-left: 1px solid #e0e0e0; }
.sheet-scroll .thumb { flex: 472; margin-top: 1px; border: 1px solid #fff; border-right-color: #888; border-bottom: 2px solid #777; }
.sheet-scroll .track { flex: 110; }
```
